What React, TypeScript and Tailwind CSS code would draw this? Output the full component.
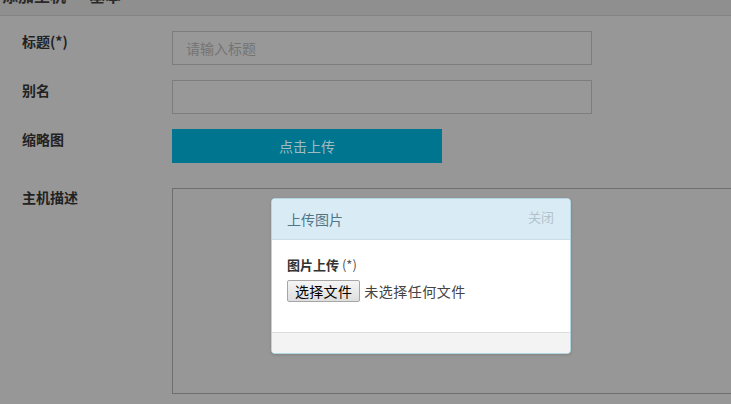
export default function App() {
  const font = { fontFamily: '"Noto Sans CJK SC", "Noto Sans", sans-serif' };
  return (
    <div className="relative w-[731px] h-[404px] overflow-hidden bg-[#979797]" style={font}>
      <div className="h-[16px] overflow-hidden bg-[#8f8f8f] border-b border-[#848484]">
        <div className="mt-[-15px] pl-[2px] text-[16px] font-bold text-[#2a2a2a] leading-[20px]">添加主机 · 基本</div>
      </div>
      <div className="pt-[15px]">
        <div className="flex mb-[15px]">
          <div className="w-[172px] shrink-0 pl-[22px] text-[14px] leading-[20px] font-bold text-[#222]">标题(*)</div>
          <div className="w-[420px] h-[34px] border border-[#7d7d7d] bg-[#989898] flex items-center pl-[13px] text-[14px] text-[#747474]">请输入标题</div>
        </div>
        <div className="flex mb-[15px]">
          <div className="w-[172px] shrink-0 pl-[22px] text-[14px] leading-[20px] font-bold text-[#222]">别名</div>
          <div className="w-[420px] h-[34px] border border-[#7d7d7d] bg-[#989898]"></div>
        </div>
        <div className="flex mb-[25px]">
          <div className="w-[172px] shrink-0 pl-[22px] text-[14px] leading-[20px] font-bold text-[#222]">缩略图</div>
          <div className="w-[270px] h-[34px] bg-[#00758f] flex items-center justify-center text-[14px] text-[#9fbcc4]">点击上传</div>
        </div>
        <div className="flex">
          <div className="w-[172px] shrink-0 pl-[22px] -mt-[1px] text-[14px] leading-[20px] font-bold text-[#222]">主机描述</div>
          <div className="w-[570px] shrink-0 h-[206px] border border-[#6e6e6e] bg-[#979797]"></div>
        </div>
      </div>

      <div className="absolute left-[271px] top-[198px] w-[300px] h-[156px] rounded-[4px] border border-[#b3d6e2] bg-white overflow-hidden flex flex-col shadow-[0_1px_3px_rgba(0,0,0,0.15)]">
        <div className="h-[41px] bg-[#d9ecf5] border-b border-[#c9dfe8] flex items-center justify-between pl-[15px] pr-[16px]">
          <span className="text-[14px] text-[#4f7589]">上传图片</span>
          <span className="text-[13px] text-[#b3c3cb] -mt-[4px]">关闭</span>
        </div>
        <div className="flex-1 pl-[15px] pt-[15px]">
          <div className="text-[13px] leading-[20px] text-[#333]">
            <span className="font-bold">图片上传</span> <span className="text-[#555]">(*)</span>
          </div>
          <div className="mt-[5px] flex items-center">
            <div className="h-[22px] px-[7px] flex items-center border border-[#a6a6a6] rounded-[2px] bg-gradient-to-b from-[#f5f5f5] to-[#dedede] text-[14px] tracking-[0.3px] text-black">选择文件</div>
            <span className="ml-[4px] text-[14px] tracking-[0.5px] text-[#444]">未选择任何文件</span>
          </div>
        </div>
        <div className="h-[21px] bg-[#f3f3f3] border-t border-[#dddddd]"></div>
      </div>
    </div>
  );
}
